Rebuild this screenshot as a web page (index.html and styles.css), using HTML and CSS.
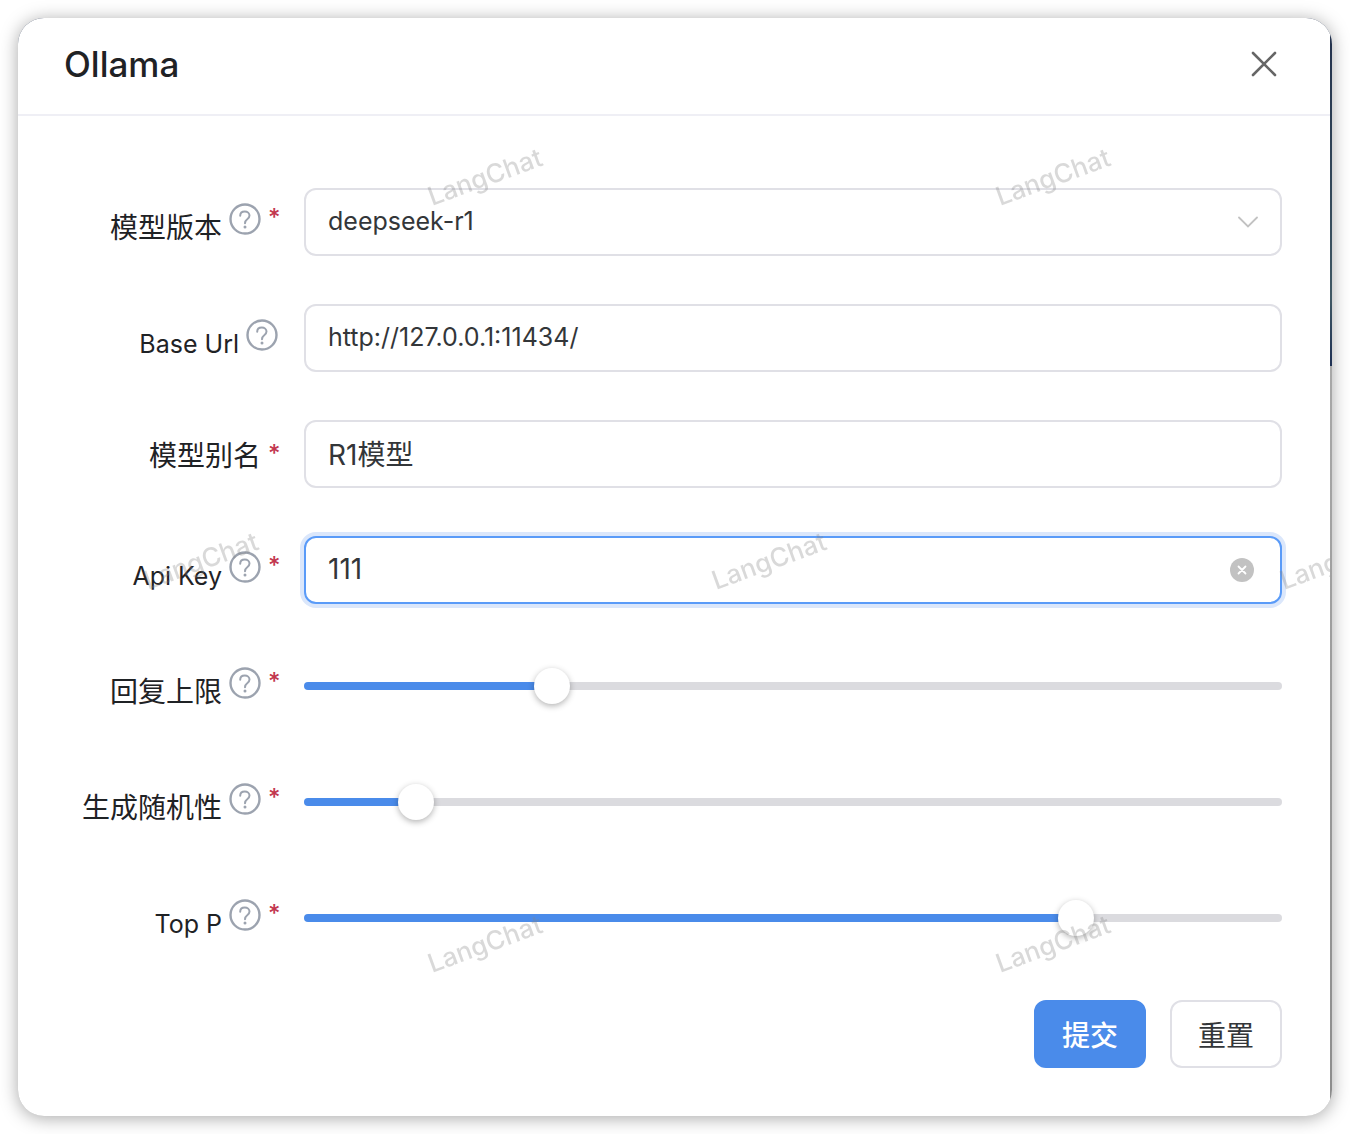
FILE: index.html
```html
<!DOCTYPE html>
<html lang="zh-CN">
  <head>
    <meta charset="UTF-8" />
    <meta name="viewport" content="width=device-width, initial-scale=1.0" />
    <title>Ollama</title>
    <link rel="stylesheet" href="styles.css">
  </head>
  <body>
    <!-- Shared icons -->
    <svg class="sprite" aria-hidden="true">
      <symbol id="icon-help" viewBox="0 0 32 32">
        <circle cx="16" cy="16" r="14.5" fill="none" stroke="currentColor" stroke-width="2.4" />
        <path d="M11.2 12.8c0-2.6 1.9-4.2 4.6-4.2s4.7 1.7 4.7 4c0 1.7-.9 2.6-2.3 3.7C16.6 17.5 16 18.3 16 20.3" fill="none" stroke="currentColor" stroke-width="2" stroke-linecap="round" />
        <circle cx="16" cy="24" r="1.5" fill="currentColor" />
      </symbol>
    </svg>

    <div class="modal" role="dialog" aria-labelledby="modalTitle">
      <div class="modal-body">
        <header class="modal-header">
          <h1 id="modalTitle">Ollama</h1>
          <button type="button" class="close-btn" aria-label="关闭">
            <svg viewBox="0 0 26 26" width="26" height="26">
              <path d="M2 2L24 24M24 2L2 24" fill="none" stroke="currentColor" stroke-width="2.6" stroke-linecap="round" />
            </svg>
          </button>
        </header>

        <form id="modelForm" class="form">
          <div class="row has-help">
            <div class="label">
              <label for="model">模型版本</label>
              <svg class="help"><use href="#icon-help" /></svg>
              <span class="required">*</span>
            </div>
            <div class="control">
              <select id="model" name="model" class="field latin">
                <option selected>deepseek-r1</option>
              </select>
              <svg class="arrow" viewBox="0 0 20 12">
                <path d="M1 1.5L10 10.5L19 1.5" fill="none" stroke="currentColor" stroke-width="1.8" stroke-linecap="round" />
              </svg>
            </div>
          </div>

          <div class="row has-help">
            <div class="label">
              <label for="baseUrl" class="latin">Base Url</label>
              <svg class="help"><use href="#icon-help" /></svg>
            </div>
            <div class="control">
              <input type="text" id="baseUrl" name="baseUrl" class="field latin" value="http://127.0.0.1:11434/" />
            </div>
          </div>

          <div class="row">
            <div class="label">
              <label for="alias">模型别名</label>
              <span class="required">*</span>
            </div>
            <div class="control">
              <input type="text" id="alias" name="alias" class="field" value="R1模型" required />
            </div>
          </div>

          <div class="row has-help">
            <div class="label">
              <label for="apiKey" class="latin">Api Key</label>
              <svg class="help"><use href="#icon-help" /></svg>
              <span class="required">*</span>
            </div>
            <div class="control">
              <input type="text" id="apiKey" name="apiKey" class="field active" value="111" required />
              <button type="button" class="clear-btn" aria-label="清除">
                <svg viewBox="0 0 24 24" width="24" height="24">
                  <circle cx="12" cy="12" r="12" fill="#c2c2c2" />
                  <path d="M8.5 8.5L15.5 15.5M15.5 8.5L8.5 15.5" stroke="#fff" stroke-width="1.8" stroke-linecap="round" />
                </svg>
              </button>
            </div>
          </div>

          <div class="row has-help">
            <div class="label">
              <label for="maxToken">回复上限</label>
              <svg class="help"><use href="#icon-help" /></svg>
              <span class="required">*</span>
            </div>
            <div class="control">
              <input type="range" id="maxToken" class="slider" min="0" max="8192" step="1" value="2000" style="--value: 0.244" />
            </div>
          </div>

          <div class="row has-help">
            <div class="label">
              <label for="temperature">生成随机性</label>
              <svg class="help"><use href="#icon-help" /></svg>
              <span class="required">*</span>
            </div>
            <div class="control">
              <input type="range" id="temperature" class="slider" min="0" max="2" step="0.05" value="0.2" style="--value: 0.1" />
            </div>
          </div>

          <div class="row has-help">
            <div class="label">
              <label for="topP" class="latin">Top P</label>
              <svg class="help"><use href="#icon-help" /></svg>
              <span class="required">*</span>
            </div>
            <div class="control">
              <input type="range" id="topP" class="slider" min="0" max="1" step="0.1" value="0.8" style="--value: 0.8" />
            </div>
          </div>

          <div class="actions">
            <button type="submit" class="btn btn-primary">提交</button>
            <button type="reset" class="btn">重置</button>
          </div>
        </form>

        <!-- Watermark -->
        <svg class="watermark" aria-hidden="true">
          <defs>
            <pattern id="mark" width="568" height="767" patternUnits="userSpaceOnUse">
              <text x="467" y="168" transform="rotate(-20 467 159)">LangChat</text>
              <text x="183" y="552" transform="rotate(-20 183 543)">LangChat</text>
            </pattern>
          </defs>
          <rect width="100%" height="100%" fill="url(#mark)" />
        </svg>
      </div>
    </div>

    <script>
      // Keep the filled part of each slider in step with its value
      document.querySelectorAll(".slider").forEach(function (slider) {
        slider.addEventListener("input", function () {
          const ratio = (slider.value - slider.min) / (slider.max - slider.min);
          slider.style.setProperty("--value", ratio);
        });
      });

      document.querySelector(".clear-btn").addEventListener("click", function () {
        document.getElementById("apiKey").value = "";
      });

      document
        .getElementById("modelForm")
        .addEventListener("submit", function (event) {
          event.preventDefault();
        });
    </script>
  </body>
</html>
```
FILE: styles.css
```css
/* General Reset */
* {
  margin: 0;
  padding: 0;
  box-sizing: border-box;
  font-family: Inter, "Noto Sans CJK SC", sans-serif;
}

body {
  background-color: #fff;
  padding: 18px;
  color: #1f2225;
}

.sprite {
  display: none;
}

/* Modal */
.modal {
  padding-right: 2px;
  border-radius: 26px;
  overflow: hidden;
  background: linear-gradient(#22304c, #34495a 180px, #405864 280px, #1e3054 348px, #a8a8a8 348px, #8c8c8c);
  box-shadow: 0 2px 18px rgba(0, 0, 0, 0.35);
}

.modal-body {
  position: relative;
  overflow: hidden;
  background-color: #fff;
}

.modal-header {
  display: flex;
  align-items: center;
  justify-content: space-between;
  height: 98px;
  padding: 0 53px 4px 46px;
  border-bottom: 2px solid #efeff5;
}

.modal-header h1 {
  font-size: 35px;
  font-weight: 500;
}

.close-btn,
.clear-btn {
  display: flex;
  border: none;
  background: none;
  color: #666;
  cursor: pointer;
}

/* Form */
.form {
  display: flex;
  flex-direction: column;
  gap: 48px;
  padding: 72px 48px 48px 46px;
}

.row {
  display: grid;
  grid-template-columns: 216px 1fr;
  gap: 24px;
}

.label {
  display: flex;
  justify-content: flex-end;
  gap: 7px;
  height: 68px;
  padding-right: 2px;
  font-size: 28px;
  line-height: 68px;
  white-space: nowrap;
}

.label label {
  padding-top: 2px;
}

.has-help label {
  padding-top: 6px;
}

.help {
  width: 32px;
  height: 32px;
  margin-top: 15px;
  color: #9ca3af;
}

.required {
  width: 10px;
  color: #c2374f;
  font-size: 24px;
  font-weight: 500;
}

.has-help .required {
  line-height: 60px;
}

.control {
  position: relative;
  display: flex;
  align-items: center;
}

.field {
  width: 100%;
  height: 68px;
  padding: 0 22px 2px;
  border: 2px solid #e0e0e6;
  border-radius: 12px;
  outline: none;
  background-color: #fff;
  color: #333639;
  font-size: 28px;
  appearance: none;
}

.field.active {
  border-color: #5a9bf8;
  box-shadow: 0 0 0 4px #dbe7fb;
}

.latin {
  font-size: 25px;
}

.arrow {
  position: absolute;
  right: 24px;
  width: 20px;
  height: 12px;
  color: #c2c2c2;
  pointer-events: none;
}

.clear-btn {
  position: absolute;
  right: 28px;
}

/* Sliders */
.slider {
  width: 100%;
  height: 36px;
  appearance: none;
  background: none;
  cursor: pointer;
}

.slider::-webkit-slider-runnable-track {
  height: 8px;
  border-radius: 4px;
  background: linear-gradient(#4a8bea, #4a8bea) no-repeat #dbdbdf;
  background-size: calc(18px + (100% - 36px) * var(--value)) 100%;
}

.slider::-webkit-slider-thumb {
  appearance: none;
  width: 36px;
  height: 36px;
  margin-top: -14px;
  border-radius: 50%;
  background-color: #fff;
  box-shadow: 0 2px 6px rgba(0, 0, 0, 0.3);
}

/* Buttons */
.actions {
  display: flex;
  justify-content: flex-end;
  gap: 24px;
}

.btn {
  height: 68px;
  padding: 0 26px;
  border: 2px solid #e0e0e6;
  border-radius: 12px;
  background-color: #fff;
  color: #333639;
  font-size: 28px;
  cursor: pointer;
}

.btn-primary {
  border-color: #4a8bea;
  background-color: #4a8bea;
  color: #fff;
  font-weight: 500;
}

/* Watermark */
.watermark {
  position: absolute;
  top: 0;
  left: 0;
  width: 100%;
  height: 100%;
  pointer-events: none;
}

.watermark text {
  fill: rgba(128, 128, 128, 0.3);
  font-size: 26px;
  font-weight: 500;
  text-anchor: middle;
}
```
